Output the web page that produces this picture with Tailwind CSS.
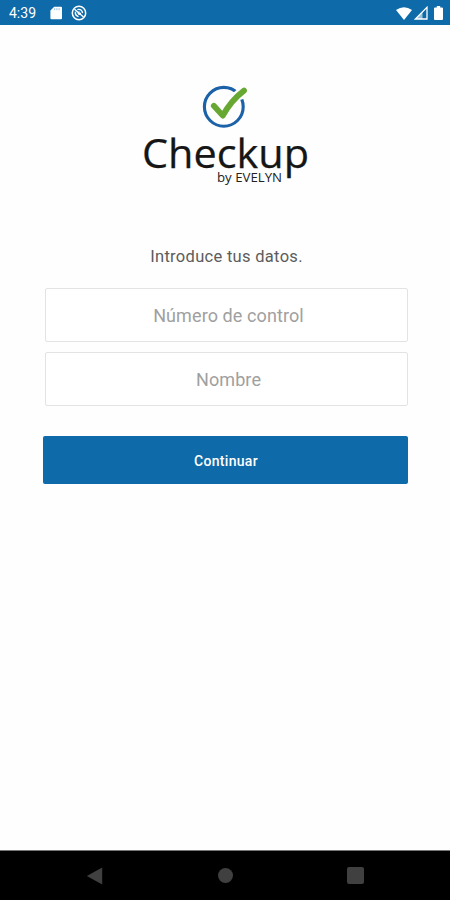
<!DOCTYPE html>
<html lang="es">

<head>
    <meta charset="UTF-8">
    <meta name="viewport" content="width=device-width, initial-scale=1.0">
    <title>Checkup by EVELYN</title>
    <script src="https://cdn.jsdelivr.net/npm/@tailwindcss/browser@4"></script>
</head>

<body class="bg-[#fefefe] font-['Roboto',sans-serif]">
    <div class="flex flex-col w-[450px] h-[900px] overflow-hidden">
        <header class="flex items-center justify-between shrink-0 h-[25px] pl-[9px] pr-[7px] bg-[#0e6aa8] text-white">
            <div class="flex items-center">
                <span class="w-[41px] text-sm leading-none pt-px">4:39</span>
                <svg class="w-3 h-[14px] mt-px" viewBox="0 0 12 14" fill="currentColor">
                    <path d="M4.2 0.8H11Q12 .8 12 1.8V12.2Q12 13.2 11 13.2H1.4Q.4 13.2 .4 12.2V4.6Z" />
                    <path d="M4.7 2.2v2M6.9 2.2v2M9.1 2.2v2" stroke="#8fb9d8" stroke-width=".9" />
                </svg>
                <svg class="w-4 h-4 ml-[9px] mt-px" viewBox="0 0 16 16" fill="none" stroke="currentColor">
                    <circle cx="8" cy="8" r="6.7" stroke-width="1.5" />
                    <path d="M4.4 6.8Q4 10.8 7.6 11.6M6.4 4.6Q11 3.6 11.6 8.2" stroke-width="1.4" />
                    <path d="M3.5 4.2L12.5 12M6.6 8.4H10M8 6.4v3.6" stroke-width="1.4" />
                </svg>
            </div>
            <div class="flex items-center mt-px">
                <svg class="w-4 h-[13px]" viewBox="0 0 16 13" fill="currentColor">
                    <path d="M0 3Q8-2.4 16 3L8 13Z" />
                </svg>
                <svg class="w-[14px] h-[14px] ml-0.5" viewBox="0 0 14 14">
                    <path d="M13 1.3V13H1.3Z" fill="none" stroke="white" stroke-width="1.3" />
                    <path d="M8.5 6V13H1.3Z" fill="white" fill-opacity=".6" />
                </svg>
                <svg class="w-[9px] h-[14px] ml-[6px]" viewBox="0 0 9 14" fill="currentColor">
                    <path d="M2.8 0H6.2V1.4H8Q9 1.4 9 2.4V13Q9 14 8 14H1Q0 14 0 13V2.4Q0 1.4 1 1.4H2.8Z" />
                </svg>
            </div>
        </header>

        <main class="flex flex-col grow pl-[43px] pr-[42px]">
            <!-- Logo -->
            <svg class="w-[180px] h-[110px] mt-[55px] ml-[92px] shrink-0" viewBox="135 80 180 110">
                <circle cx="223.8" cy="106.8" r="19.4" fill="none" stroke="#1c62a8" stroke-width="3.1" />
                <path d="M233 93L246 82V98L240 100Z" fill="#fefefe" />
                <path d="M213.8 105.8L222.8 115.6Q231 100.5 244 90.6" fill="none" stroke="#67a832" stroke-width="5.8" stroke-linecap="round" stroke-linejoin="round" />
                <text x="142" y="167.5" font-family="Open Sans, sans-serif" font-size="40" textLength="167" lengthAdjust="spacingAndGlyphs" fill="#161616" stroke="#161616" stroke-width=".25">Checkup</text>
                <text x="217" y="181.5" font-family="Open Sans, sans-serif" font-size="12" textLength="65" lengthAdjust="spacingAndGlyphs" fill="#222">by EVELYN</text>
            </svg>

            <p class="mt-[55px] h-[24px] leading-6 pl-[2px] text-center text-[16.5px] tracking-[0.3px] text-[#5c5c5c]">Introduce tus datos.</p>

            <form class="flex flex-col mt-[19px]">
                <input type="text" placeholder="Número de control" class="ml-[2px] pl-[6px] pr-0.5 h-[54px] border border-[#e3e3e3] bg-white rounded-[2px] text-center text-lg tracking-[0.1px] placeholder:text-[#a0a0a0]">
                <input type="text" placeholder="Nombre" class="ml-[2px] pl-[6px] pr-0.5 mt-[10px] h-[54px] border border-[#e3e3e3] bg-white rounded-[2px] text-center text-lg tracking-[0.1px] placeholder:text-[#a0a0a0]">
                <button type="button" class="mt-[30px] pt-0.5 pl-px h-[48px] bg-[#0e6aa8] rounded-[2px] text-sm font-medium tracking-[0.3px] text-white">Continuar</button>
            </form>
        </main>

        <nav class="flex items-center justify-between shrink-0 h-[50px] pl-[86px] pr-[86px] bg-black border-t border-[#777]">
            <svg class="w-[17px] h-[18px]" viewBox="0 0 17 18" fill="#404040">
                <path d="M16.2 .5V17.5L.8 9Z" />
            </svg>
            <div class="w-[15px] h-[15px] rounded-full bg-[#404040]"></div>
            <div class="w-[17px] h-[17px] rounded-[2px] bg-[#404040]"></div>
        </nav>
    </div>
</body>

</html>
